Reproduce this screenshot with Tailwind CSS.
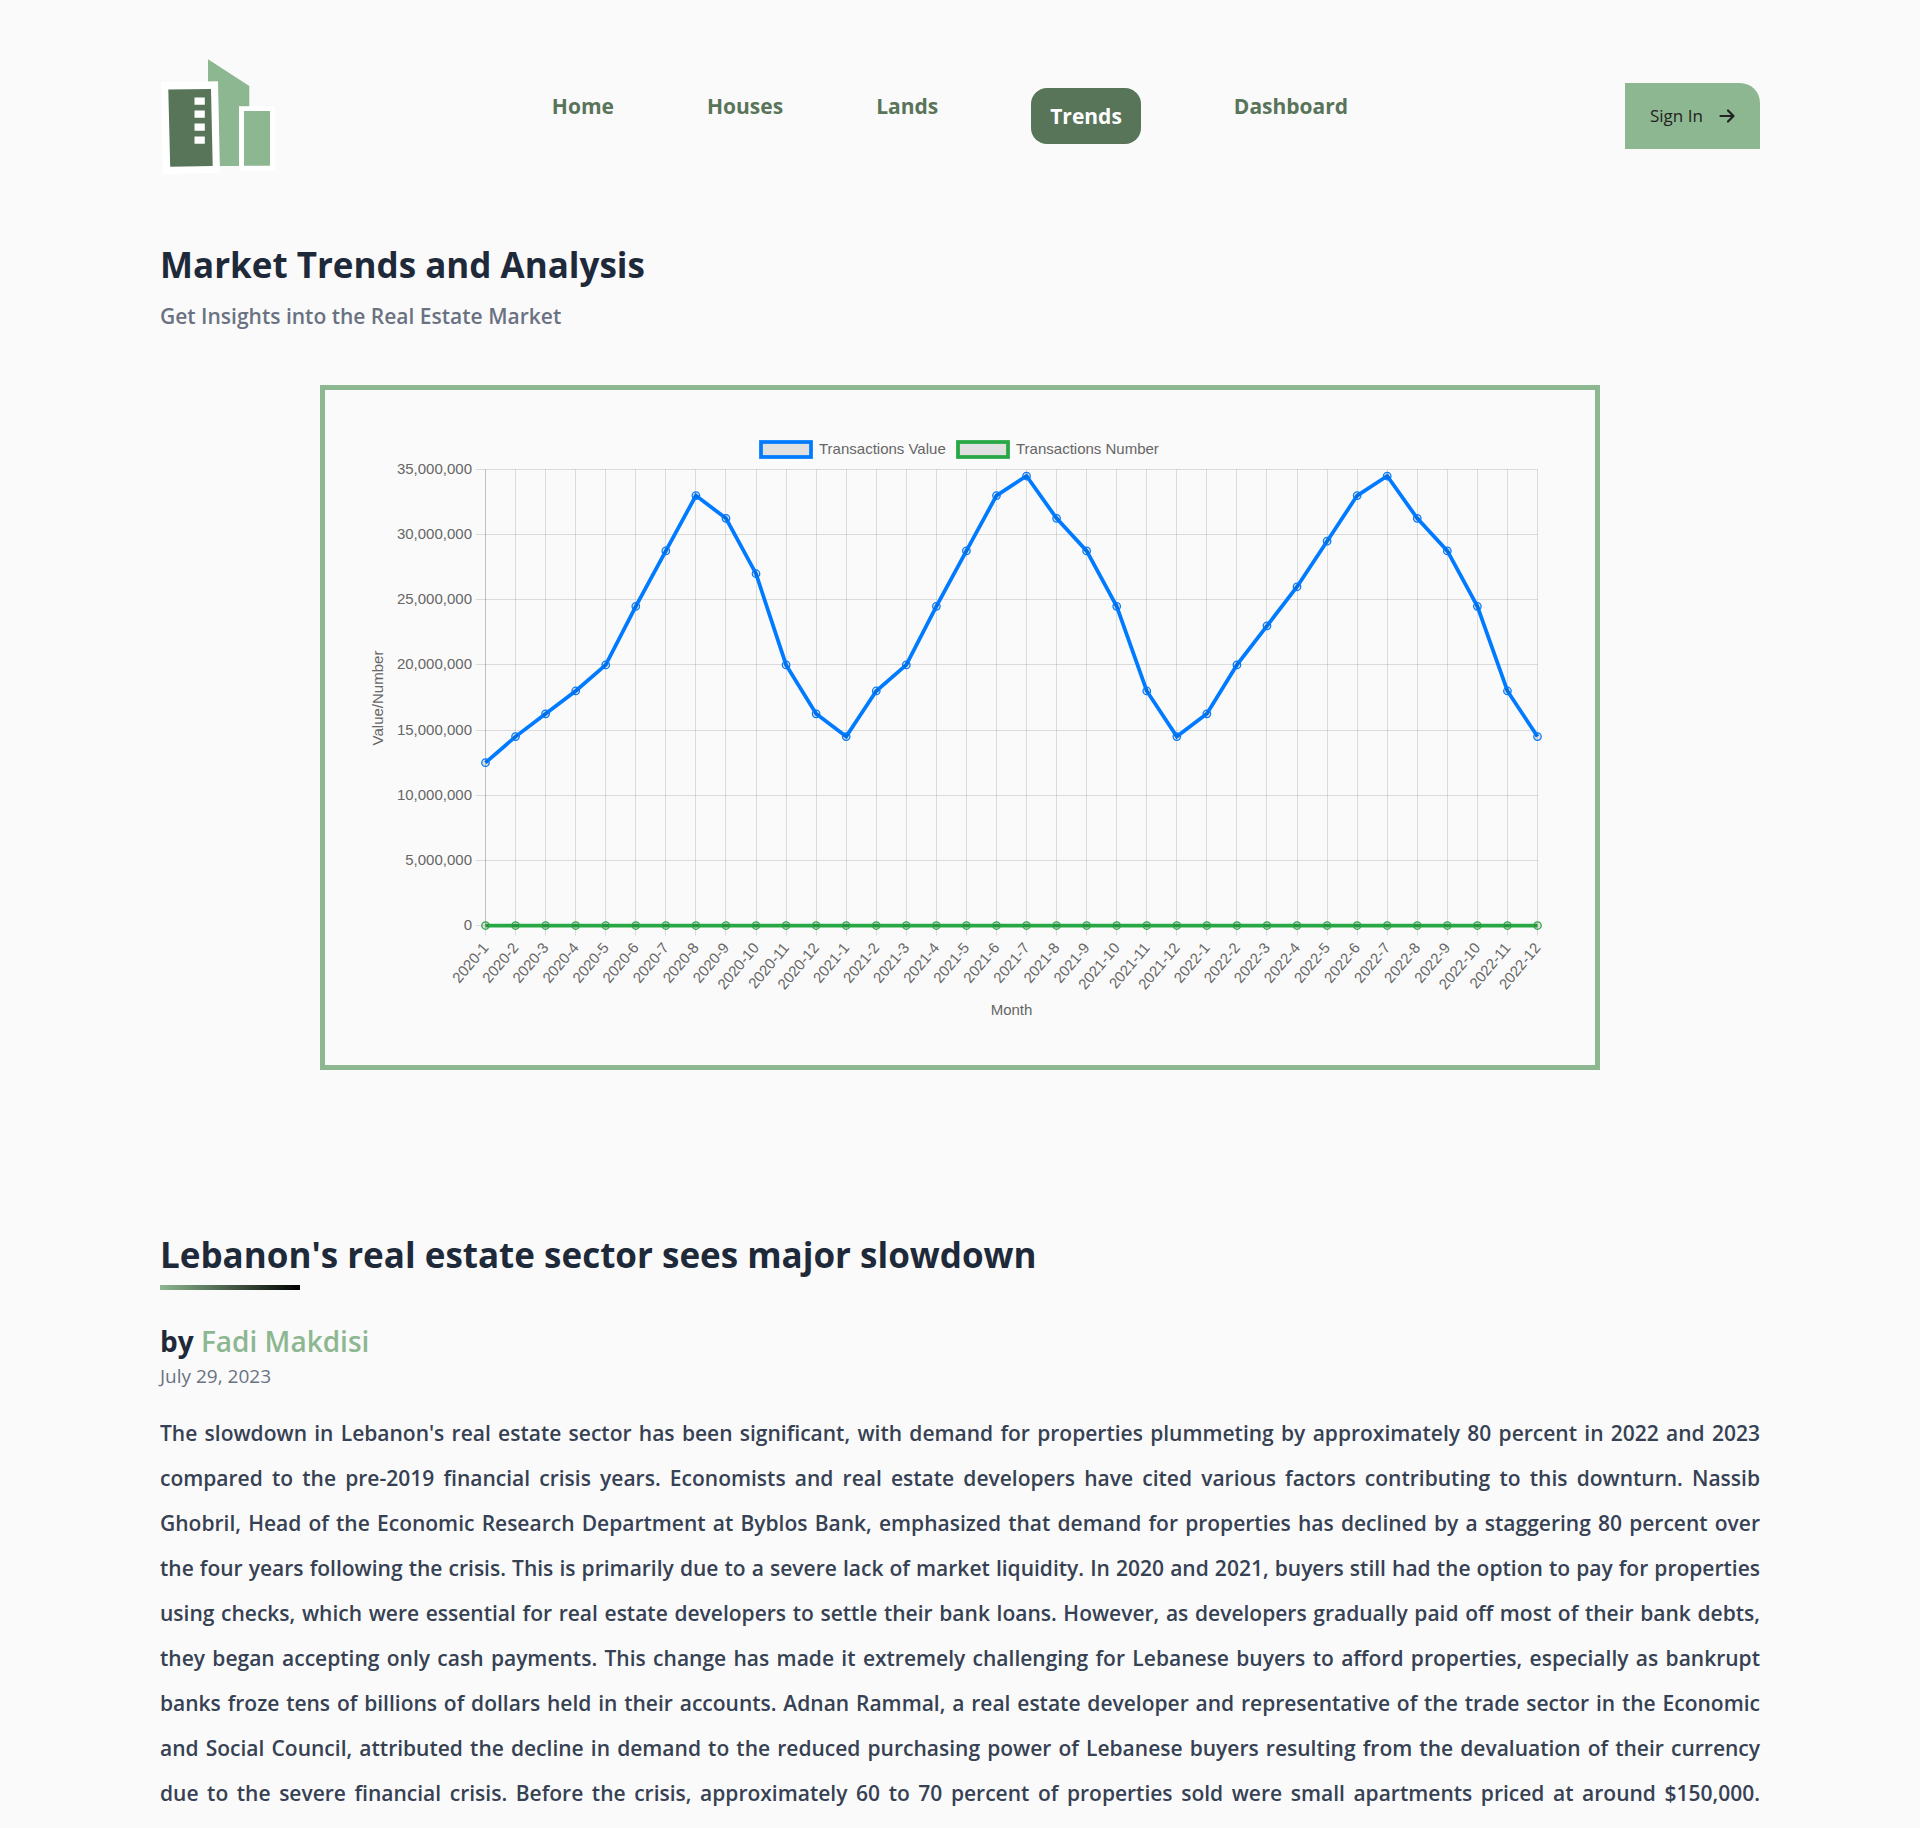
<!DOCTYPE html>
<html lang="en">
<head>
<meta charset="utf-8">
<meta name="viewport" content="width=device-width, initial-scale=1">
<title>Market Trends and Analysis</title>
<script src="https://cdn.jsdelivr.net/npm/@tailwindcss/browser@4"></script>
</head>
<body class="bg-[#fafafa] font-['Open_Sans',sans-serif] text-gray-800">
<div class="mx-auto w-5/6">
  <header class="flex items-center justify-between pt-14">
    <a href="#" aria-label="Real estate home">
      <svg class="h-[120px] w-[115px]" viewBox="0 0 115 120" aria-hidden="true">
        <path fill="#8db790" d="M48 3.3 89.3 30V110H48Z"/>
        <path fill="#fff" d="M1 26 58 25.2 60 116.8 2.7 118Z"/>
        <path fill="#587459" d="M8.3 33.4 51 33 52.7 110 10.2 110.7Z"/>
        <path fill="#fff" d="M79 50.3h36v64.4H79Z"/>
        <path fill="#8db790" d="M84 55h26v54.7H84Z"/>
        <path fill="#fff" d="M34.5 41.5h10.3v7.3H34.5ZM34.5 54.5h10.3v7.3H34.5ZM34.5 67.5h10.3v7.3H34.5ZM34.5 80.5h10.3v7.3H34.5Z"/>
      </svg>
    </a>
    <nav class="flex items-start gap-[93px] text-[21px] leading-9 font-bold text-[#587459]">
      <a href="#">Home</a>
      <a href="#">Houses</a>
      <a href="#">Lands</a>
      <a href="#" aria-current="page" class="rounded-2xl bg-[#587459] px-[19px] py-[10px] text-white">Trends</a>
      <a href="#">Dashboard</a>
    </nav>
    <button type="button" class="flex h-[66px] w-[135px] items-center justify-between rounded-tr-[20px] bg-[#8db790] px-[25px] text-[17px] font-medium text-[#222]">
      Sign In
      <svg class="size-4" viewBox="0 0 16 16" fill="none" stroke="currentColor" stroke-width="2.2" stroke-linecap="round" stroke-linejoin="round" aria-hidden="true"><path d="M1.5 8h13M9 2.5 14.5 8 9 13.5"/></svg>
    </button>
  </header>

  <main>
    <h1 class="mt-[66px] text-[35px] leading-[45px] font-bold">Market Trends and Analysis</h1>
    <p class="mt-[11px] text-[21px] leading-9 font-semibold text-gray-500">Get Insights into the Real Estate Market</p>

    <section class="mx-auto mt-[51px] w-4/5 border-5 border-[#8db790]">
      <svg id="chart" class="block h-auto w-full font-['Liberation_Sans',Arial,sans-serif] text-[15px]" viewBox="0 0 1270 675" fill="#666" role="img" aria-label="Transactions value and number by month"></svg>
    </section>

    <article class="pb-3">
      <h2 class="mt-[162px] text-[35px] leading-[45px] font-bold">Lebanon's real estate sector sees major slowdown</h2>
      <div class="mt-2 h-[5px] w-[140px] bg-linear-to-r/srgb from-[#8db790] to-black"></div>
      <p class="mt-[31px] text-[28px] leading-10 font-bold">by <a href="#" class="font-semibold text-[#8db790]">Fadi Makdisi</a></p>
      <p class="text-[19px] leading-[30px] text-gray-500">July 29, 2023</p>
      <p class="mt-5 text-justify [text-align-last:justify] text-[21px] leading-[45px] font-semibold text-gray-700">
        The slowdown in Lebanon's real estate sector has been significant, with demand for properties plummeting by approximately 80 percent in 2022 and 2023<br>
        compared to the pre-2019 financial crisis years. Economists and real estate developers have cited various factors contributing to this downturn. Nassib<br>
        Ghobril, Head of the Economic Research Department at Byblos Bank, emphasized that demand for properties has declined by a staggering 80 percent over<br>
        the four years following the crisis. This is primarily due to a severe lack of market liquidity. In 2020 and 2021, buyers still had the option to pay for properties<br>
        using checks, which were essential for real estate developers to settle their bank loans. However, as developers gradually paid off most of their bank debts,<br>
        they began accepting only cash payments. This change has made it extremely challenging for Lebanese buyers to afford properties, especially as bankrupt<br>
        banks froze tens of billions of dollars held in their accounts. Adnan Rammal, a real estate developer and representative of the trade sector in the Economic<br>
        and Social Council, attributed the decline in demand to the reduced purchasing power of Lebanese buyers resulting from the devaluation of their currency<br>
        due to the severe financial crisis. Before the crisis, approximately 60 to 70 percent of properties sold were small apartments priced at around $150,000.
      </p>
    </article>
  </main>
</div>
<script>
  // Transaction values per month, in millions, January 2020 to December 2022
  const values = [12.5,14.5,16.25,18,20,24.5,28.75,33,31.25,27,20,16.25,
                  14.5,18,20,24.5,28.75,33,34.5,31.25,28.75,24.5,18,14.5,
                  16.25,20,23,26,29.5,33,34.5,31.25,28.75,24.5,18,14.5];
  const left = 160.5, right = 1212.5, top0 = 79.5, bottom = 535.5;
  const X = i => left + i * (right - left) / (values.length - 1);
  const Y = v => bottom - v * (bottom - top0) / 35;
  const snap = n => Math.floor(n) + 0.5;
  let grid = '', labels = '';
  values.forEach((_, i) => {
    const x = snap(X(i));
    grid += `<path d="M${x} ${top0}V${bottom + 10}"/>`;
    labels += `<text text-anchor="end" dy="5" transform="translate(${X(i)} 555) rotate(-50)">${2020 + Math.floor(i / 12)}-${i % 12 + 1}</text>`;
  });
  for (let v = 0; v <= 35; v += 5) {
    const y = snap(Y(v));
    grid += `<path d="M${left - 10} ${y}H${right}"/>`;
    labels += `<text text-anchor="end" x="147" y="${y + 4}">${(v * 1e6).toLocaleString('en-US')}</text>`;
  }
  grid += `<path d="M${left} ${top0}V${bottom}"/>`;
  const series = (data, color) => {
    const pts = data.map((v, i) => [X(i), Y(v)]);
    return `<polyline fill="none" stroke="${color}" stroke-width="3.75" points="${pts.map(p => p.join()).join(' ')}"/>` +
      pts.map(p => `<circle cx="${p[0]}" cy="${p[1]}" r="3.75" fill="#000" fill-opacity=".1" stroke="${color}" stroke-width="1.25"/>`).join('');
  };
  const key = (x, color, name) =>
    `<rect x="${x}" y="52" width="50" height="15" fill="#e0e0e0" stroke="${color}" stroke-width="3.75"/><text x="${x + 58}" y="64">${name}</text>`;
  document.getElementById('chart').innerHTML =
    `<g stroke="#000" stroke-opacity=".12">${grid}</g>` + labels +
    series(values.map(() => 0), '#28a745') + series(values, '#007bff') +
    key(436, '#007bff', 'Transactions Value') + key(633, '#28a745', 'Transactions Number') +
    `<text text-anchor="middle" x="686.5" y="625">Month</text>` +
    `<text text-anchor="middle" transform="translate(58 308) rotate(-90)">Value/Number</text>`;
</script>
</body>
</html>
